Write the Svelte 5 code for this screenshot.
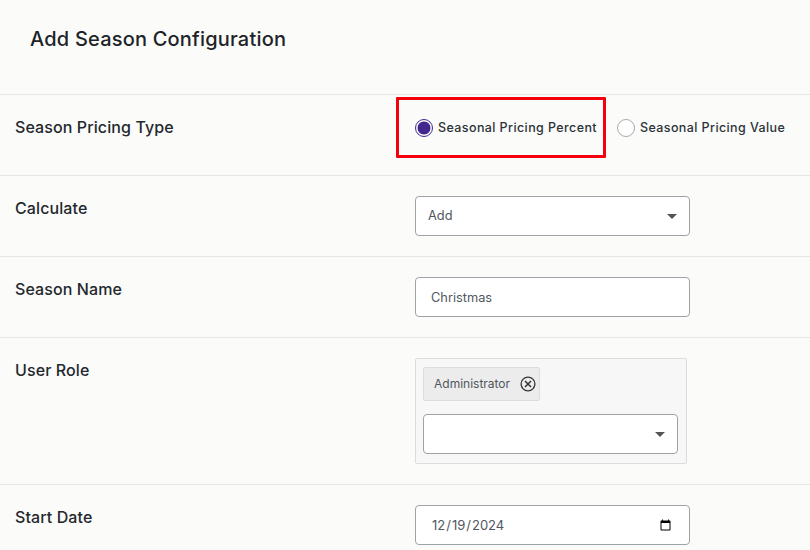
<script>
  let pricingType = $state("percent");
  let seasonName = $state("Christmas");
  let startDate = $state("2024-12-19");
</script>

<div class="page">
  <h2>Add Season Configuration</h2>

  <div class="row">
    <div class="label">Season Pricing Type</div>
    <div class="field radios">
      <label class="radio">
        <input type="radio" value="percent" bind:group={pricingType} />
        <span>Seasonal Pricing Percent</span>
      </label>
      <label class="radio">
        <input type="radio" value="value" bind:group={pricingType} />
        <span>Seasonal Pricing Value</span>
      </label>
      <div class="highlight"></div>
    </div>
  </div>

  <div class="row">
    <div class="label">Calculate</div>
    <div class="field">
      <div class="control select">
        <span>Add</span>
        <i class="caret"></i>
      </div>
    </div>
  </div>

  <div class="row">
    <div class="label">Season Name</div>
    <div class="field">
      <input class="control text" type="text" bind:value={seasonName} />
    </div>
  </div>

  <div class="row">
    <div class="label">User Role</div>
    <div class="field">
      <div class="multi">
        <div class="chip">
          <span>Administrator</span>
          <svg width="16" height="16" viewBox="0 0 16 16" fill="none" stroke="#333" stroke-width="1.3">
            <circle cx="8" cy="8" r="6.9" />
            <path d="M5 5l6 6M11 5l-6 6" stroke-width="1.5" />
          </svg>
        </div>
        <div class="control select inner">
          <span></span>
          <i class="caret"></i>
        </div>
      </div>
    </div>
  </div>

  <div class="row">
    <div class="label">Start Date</div>
    <div class="field">
      <input class="control text date" type="date" bind:value={startDate} />
    </div>
  </div>
</div>

<style>
  :global(body) {
    background: #fbfbfa;
    font-family: Inter, "Liberation Sans", sans-serif;
    overflow: hidden;
  }

  .page {
    width: 810px;
    height: 550px;
    overflow: hidden;
  }

  h2 {
    margin: 0;
    height: 94px;
    box-sizing: border-box;
    padding: 26px 0 0 30px;
    font-size: 20px;
    line-height: 26px;
    font-weight: 500;
    color: #1d2327;
    letter-spacing: 0.2px;
  }

  .row {
    display: flex;
    border-top: 1px solid #e6e6e4;
    padding: 20px 0;
  }

  .label {
    width: 415px;
    box-sizing: border-box;
    padding: 2px 0 0 15px;
    font-size: 16px;
    line-height: 20px;
    font-weight: 500;
    color: #23282d;
    letter-spacing: 0.1px;
  }

  .field {
    flex: 1;
  }

  .radios {
    position: relative;
    display: flex;
    height: 40px;
    align-items: flex-start;
    gap: 20px;
  }

  .radio {
    display: flex;
    align-items: center;
    height: 26px;
    gap: 5px;
    font-size: 12.5px;
    font-weight: 500;
    color: #2c3338;
    letter-spacing: 0.4px;
  }

  .radio span {
    margin-top: -1px;
  }

  .radio input {
    appearance: none;
    margin: 0;
    width: 18px;
    height: 18px;
    border: 1px solid #a7aaad;
    border-radius: 50%;
    background: #fff;
    box-sizing: border-box;
  }

  .radio input:checked {
    border-color: #41288f;
    background: radial-gradient(circle, #41288f 0 6.2px, #fff 6.8px);
  }

  .highlight {
    position: absolute;
    left: -19px;
    top: -18px;
    width: 210px;
    height: 61px;
    box-sizing: border-box;
    border: 3px solid #f5000d;
    border-radius: 1px;
    pointer-events: none;
  }

  .control {
    display: flex;
    align-items: center;
    justify-content: space-between;
    box-sizing: border-box;
    width: 275px;
    height: 40px;
    background: #fff;
    border: 1px solid #9ea3a8;
    border-radius: 4px;
    font-family: inherit;
    font-size: 12.8px;
    color: #50575e;
  }

  .select {
    padding: 0 12px 2px 12px;
  }

  .text {
    display: block;
    padding: 0 15px;
    outline: none;
  }

  .date {
    font-size: 13px;
  }

  .caret {
    width: 0;
    height: 0;
    margin-top: 2px;
    border-left: 5px solid transparent;
    border-right: 5px solid transparent;
    border-top: 5px solid #555;
  }

  .multi {
    box-sizing: border-box;
    width: 272px;
    height: 106px;
    padding: 8px 8px 9px 7px;
    background: #f7f7f7;
    border: 1px solid #dcdcde;
    border-radius: 2px;
  }

  .chip {
    display: inline-flex;
    align-items: center;
    justify-content: space-between;
    box-sizing: border-box;
    width: 117px;
    height: 34px;
    padding: 0 3px 2px 10px;
    background: #ececec;
    border: 1px solid #dcdcde;
    border-radius: 2px;
    font-size: 12px;
    color: #50575e;
    vertical-align: top;
  }

  .chip svg {
    margin-top: 2px;
  }

  .inner {
    width: 255px;
    margin-top: 13px;
  }
</style>
